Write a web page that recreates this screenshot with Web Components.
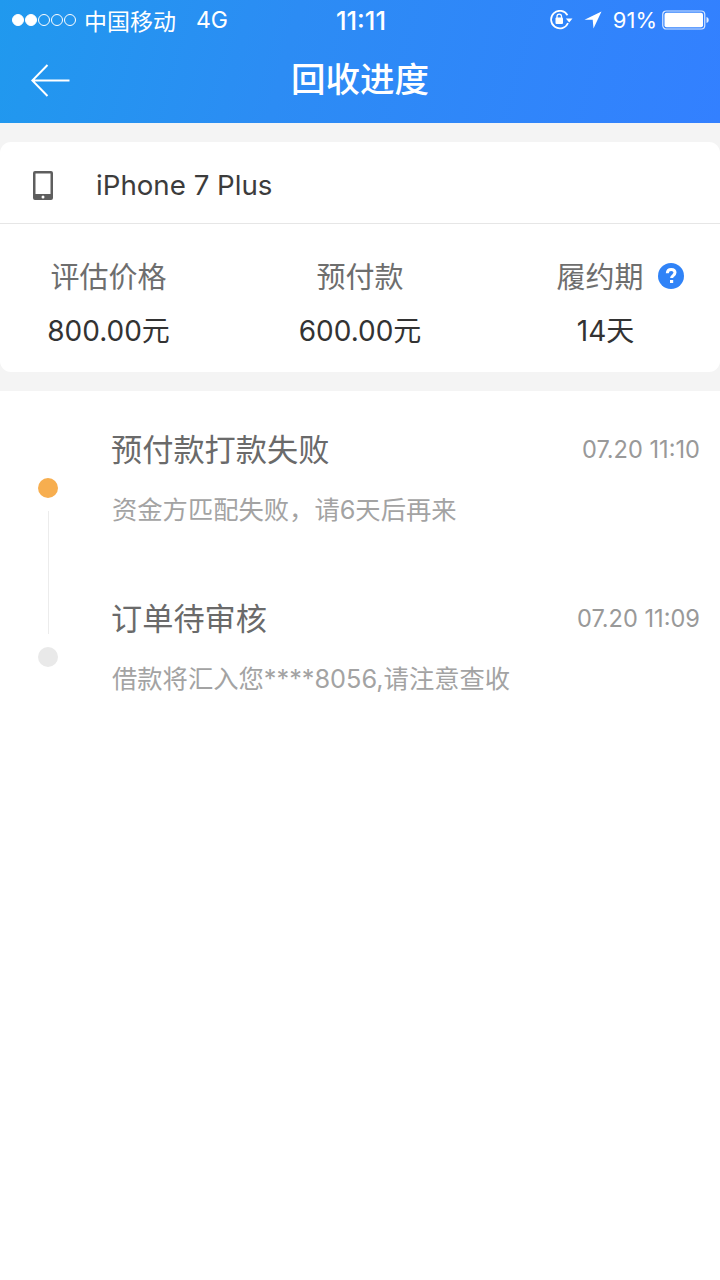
<!DOCTYPE html>
<html lang="zh">
<head>
<meta charset="utf-8">
<title>回收进度</title>
<style>
  html, body { margin: 0; padding: 0; background: #fff; }
  body { width: 720px; font-family: "Inter", "Noto Sans CJK SC", sans-serif; }
</style>
</head>
<body>
<app-header title="回收进度"></app-header>
<device-card name="iPhone 7 Plus">
  <stat-cell label="评估价格" value="800.00元"></stat-cell>
  <stat-cell label="预付款" value="600.00元"></stat-cell>
  <stat-cell label="履约期" value="14天" help></stat-cell>
</device-card>
<progress-list>
  <progress-item active title="预付款打款失败" time="07.20 11:10" note="资金方匹配失败，请6天后再来"></progress-item>
  <progress-item last title="订单待审核" time="07.20 11:09" note="借款将汇入您****8056,请注意查收"></progress-item>
</progress-list>

<script>
const FONT = '"Inter", "Noto Sans CJK SC", sans-serif';

class StatusBar extends HTMLElement {
  constructor() {
    super();
    this.attachShadow({ mode: 'open' });
  }

  connectedCallback() {
    const dots = [1, 1, 0, 0, 0].map(on => `<i class="${on ? 'on' : ''}"></i>`).join('');
    this.shadowRoot.innerHTML = `
      <style>
        :host { display: grid; grid-template-columns: 1fr auto 1fr; align-items: center; height: 40px; color: #fff; font: 400 23px ${FONT}; }
        .left, .right { display: flex; align-items: center; }
        .left { padding-left: 12px; }
        .right { justify-content: flex-end; padding-right: 11px; }
        .dots { display: flex; gap: 1px; margin-right: 8px; }
        i { box-sizing: border-box; width: 12px; height: 12px; border-radius: 50%; border: 1px solid #fff; }
        i.on { background: #fff; }
        .net { margin-left: 20px; font-size: 23px; }
        .time { font-weight: 500; font-size: 25.500px; padding-left: 2px; }
        svg { display: block; }
        .pct { margin: 0 5px 0 11px; font-size: 22px; }
      </style>
      <div class="left"><span class="dots">${dots}</span><span>中国移动</span><span class="net">4G</span></div>
      <div class="time">11:11</div>
      <div class="right">
        <svg width="23" height="20" viewBox="0 0 23 20" fill="none" stroke="#fff" stroke-width="1.700">
          <path d="M17.500 5.200A8.800 8.800 0 1 0 18 13"/>
          <path d="M15.800 8.400h6.700l-3.300 4z" fill="#fff" stroke="none"/>
          <rect x="5.500" y="7.500" width="7.500" height="6.500" rx="1" fill="#fff" stroke="none"/>
          <path d="M7 8V6.300a2.250 2.250 0 0 1 4.500 0V8" stroke-width="1.300"/>
        </svg>
        <svg style="margin-left:11px" width="18" height="18" viewBox="0 0 18 18"><path d="M17.500.5.500 8.700h8.200l.8 8.800z" fill="#fff"/></svg>
        <span class="pct">91%</span>
        <svg width="47" height="20" viewBox="0 0 47 20">
          <rect x=".75" y="1" width="42" height="18" rx="3.5" fill="none" stroke="#fff" stroke-width="1.2" opacity=".8"/>
          <rect x="2.500" y="2.700" width="38.500" height="14.600" rx="2" fill="#fff"/>
          <path d="M44.500 7c1.400.3 2.200 1.500 2.200 3s-.8 2.700-2.200 3z" fill="#fff" opacity=".85"/>
        </svg>
      </div>
    `;
  }
}

class AppHeader extends HTMLElement {
  constructor() {
    super();
    this.attachShadow({ mode: 'open' });
  }

  connectedCallback() {
    this.shadowRoot.innerHTML = `
      <style>
        :host { display: block; height: 123px; background: linear-gradient(105deg, #2099ee 0%, #2c8cf4 40%, #3380ff 100%); color: #fff; }
        nav { display: grid; grid-template-columns: 1fr auto 1fr; align-items: center; height: 83px; }
        .back { padding-left: 31px; display: flex; margin-top: -2px; }
        h1 { margin: -4px 0 0; font: 500 34.500px ${FONT}; line-height: 80px; }
      </style>
      <status-bar></status-bar>
      <nav>
        <div class="back">
          <svg width="39" height="33" viewBox="0 0 39 33" fill="none" stroke="#fff" stroke-width="2">
            <path d="M38.500 16.500H1.500M16.500 1 1.300 16.500 16.500 32"/>
          </svg>
        </div>
        <h1>${this.getAttribute('title')}</h1>
        <div></div>
      </nav>
    `;
  }
}

class DeviceCard extends HTMLElement {
  constructor() {
    super();
    this.attachShadow({ mode: 'open' });
  }

  connectedCallback() {
    this.shadowRoot.innerHTML = `
      <style>
        :host { display: block; background: #f4f4f4; padding: 19px 0; }
        .card { background: #fff; border-radius: 11px; height: 230px; }
        .head { display: flex; align-items: center; box-sizing: border-box; height: 82px; border-bottom: 1px solid #e6e6e6; padding: 5px 0 0 33px; }
        .head span { margin-left: 43px; font: 400 27.700px ${FONT}; color: #3c3c3c; }
        svg { display: block; }
        .stats { display: grid; grid-template-columns: 217px 286px 205px; padding-top: 32px; }
      </style>
      <div class="card">
        <div class="head">
          <svg width="20" height="29" viewBox="0 0 20 29">
            <path fill-rule="evenodd" fill="#5e5e5e" d="M2 0h16a2 2 0 0 1 2 2v25a2 2 0 0 1-2 2H2a2 2 0 0 1-2-2V2a2 2 0 0 1 2-2zM2.500 2.500v20.500h15V2.500z"/>
            <circle cx="10" cy="26" r="1.500" fill="#fff"/>
          </svg>
          <span>${this.getAttribute('name')}</span>
        </div>
        <div class="stats"><slot></slot></div>
      </div>
    `;
  }
}

class StatCell extends HTMLElement {
  constructor() {
    super();
    this.attachShadow({ mode: 'open' });
  }

  connectedCallback() {
    const hasHelp = this.hasAttribute('help');
    const help = hasHelp
      ? `<svg class="help" width="26" height="26" viewBox="0 0 26 26"><circle cx="13" cy="13" r="13" fill="#3083f7"/><path d="M9.300 10.200c.1-2.500 1.700-3.800 3.900-3.800 2.300 0 3.800 1.300 3.800 3.200 0 1.500-.9 2.200-1.900 3-1.100.8-1.500 1.300-1.500 2.500" fill="none" stroke="#fff" stroke-width="3"/><rect x="12" y="17" width="3.200" height="3" fill="#fff"/></svg>`
      : '';
    this.shadowRoot.innerHTML = `
      <style>
        :host { display: flex; flex-direction: column; align-items: center; }
        .label { position: relative; font: 400 29px/44px ${FONT}; color: #6e6e6e; ${hasHelp ? 'margin-right: 11px;' : ''} }
        .help { position: absolute; left: 102px; top: 7px; }
        .value { margin-top: 9px; font: 400 28px/44px ${FONT}; color: #333; }
      </style>
      <div class="label">${this.getAttribute('label')}${help}</div>
      <div class="value">${this.getAttribute('value')}</div>
    `;
  }
}

class ProgressList extends HTMLElement {
  constructor() {
    super();
    this.attachShadow({ mode: 'open' });
  }

  connectedCallback() {
    this.shadowRoot.innerHTML = `
      <style>
        :host { display: block; background: #fff; padding-top: 35px; }
      </style>
      <slot></slot>
    `;
  }
}

class ProgressItem extends HTMLElement {
  constructor() {
    super();
    this.attachShadow({ mode: 'open' });
  }

  connectedCallback() {
    const active = this.hasAttribute('active');
    const last = this.hasAttribute('last');
    this.shadowRoot.innerHTML = `
      <style>
        :host { display: grid; grid-template-columns: 112px 1fr; height: 169px; }
        .rail { display: flex; flex-direction: column; align-items: center; padding-top: 52px; box-sizing: border-box; width: 96px; }
        .dot { width: 20px; height: 20px; border-radius: 50%; background: ${active ? '#f7ae4f' : '#e9e9e9'}; flex: none; }
        .line { width: 1px; height: 123px; margin-top: 13px; background: #ececec; flex: none; margin-left: 1px; }
        .top { display: flex; justify-content: space-between; align-items: center; height: 48px; padding-right: 20px; }
        .title { font: 400 31.200px/48px ${FONT}; color: #6a6a6a; margin-left: -1px; }
        .time { font: 400 23.600px/52px ${FONT}; color: #999; }
        .note { margin-top: 18px; font: 400 25.300px/36px ${FONT}; color: #a3a3a3; }
      </style>
      <div class="rail">
        <div class="dot"></div>
        ${last ? '' : '<div class="line"></div>'}
      </div>
      <div>
        <div class="top">
          <span class="title">${this.getAttribute('title')}</span>
          <span class="time">${this.getAttribute('time')}</span>
        </div>
        <div class="note">${this.getAttribute('note')}</div>
      </div>
    `;
  }
}

customElements.define('status-bar', StatusBar);
customElements.define('app-header', AppHeader);
customElements.define('device-card', DeviceCard);
customElements.define('stat-cell', StatCell);
customElements.define('progress-list', ProgressList);
customElements.define('progress-item', ProgressItem);
</script>
</body>
</html>
